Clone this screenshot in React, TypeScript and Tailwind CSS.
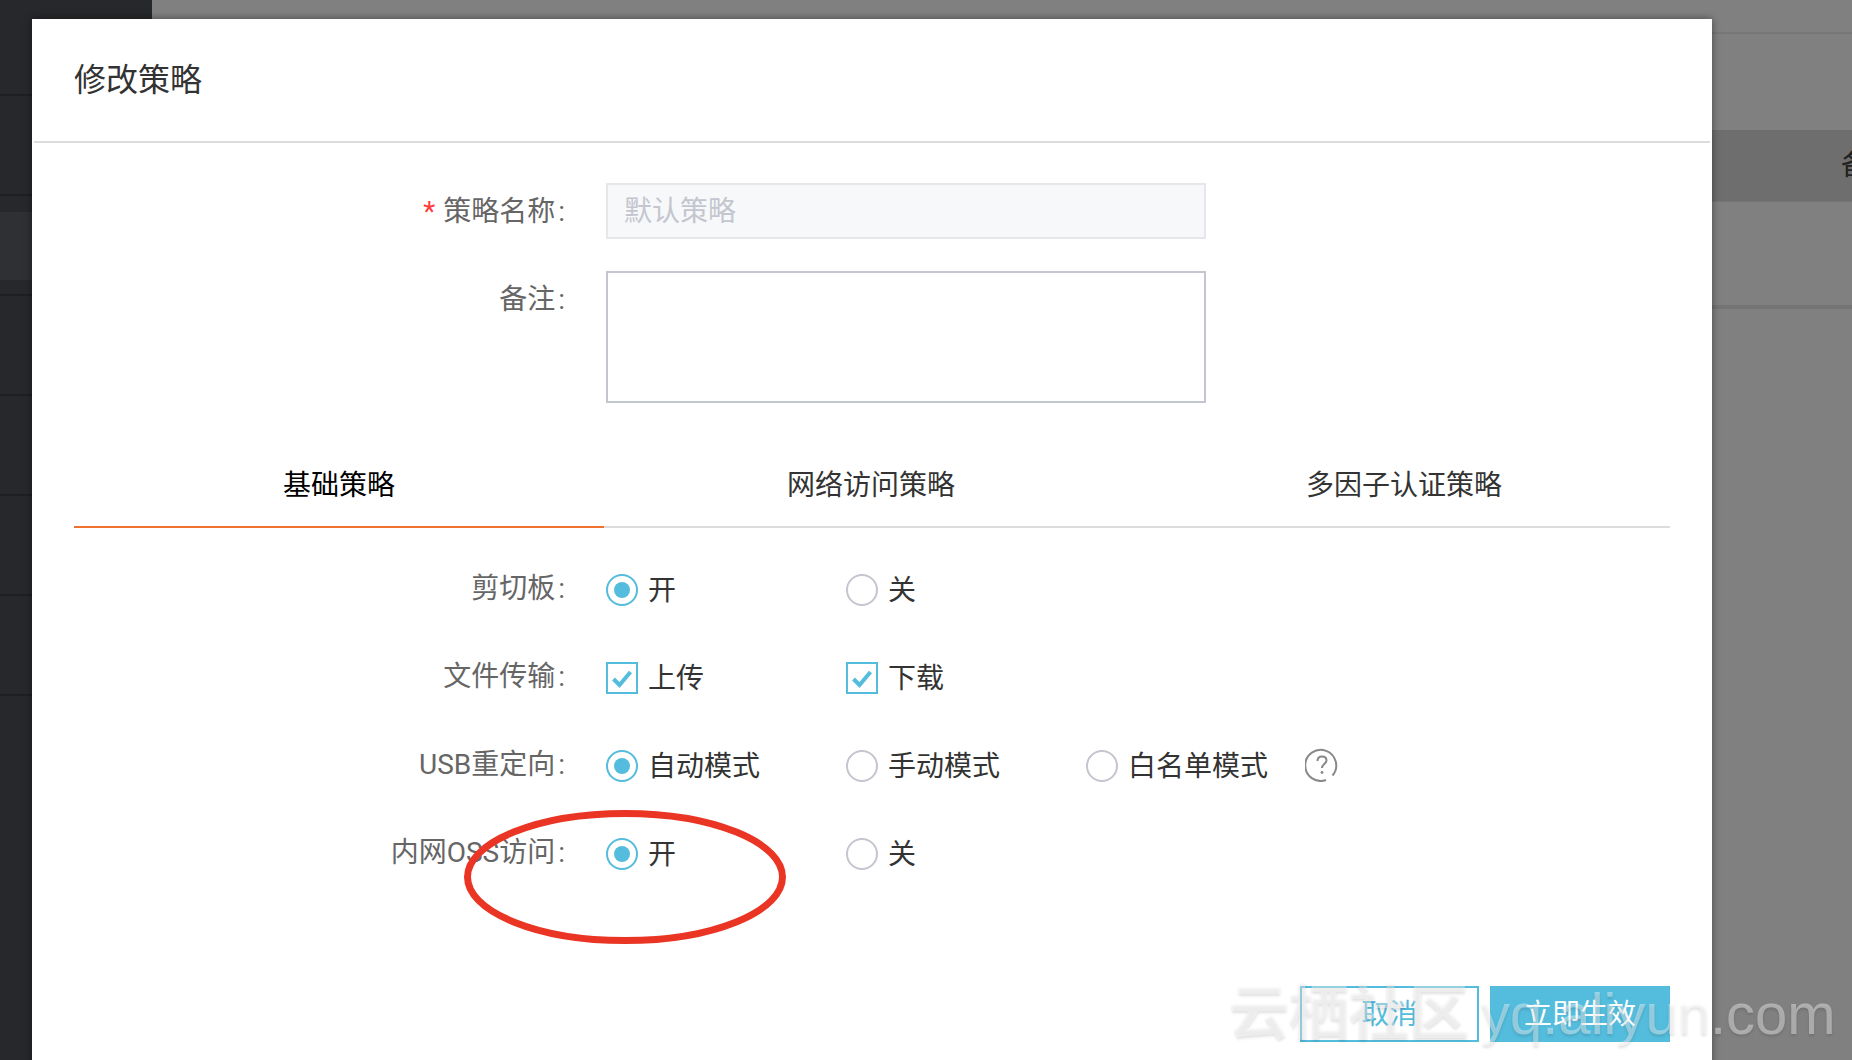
const fontStack = "font-['Liberation_Sans','Noto_Sans_CJK_SC',sans-serif]";

function Radio({ label, checked = false }: { label: string; checked?: boolean }) {
  return (
    <div className="flex w-[240px] items-center gap-[10px]">
      <span
        className={`flex h-[32px] w-[32px] items-center justify-center rounded-full border-2 ${
          checked ? 'border-[#54bcdc]' : 'border-[#c4c6cf]'
        }`}
      >
        {checked && <span className="h-[16px] w-[16px] rounded-full bg-[#54bcdc]" />}
      </span>
      <span className="pt-[2px] text-[28px] leading-[32px] text-[#333]">{label}</span>
    </div>
  );
}

function Checkbox({ label }: { label: string }) {
  return (
    <div className="flex w-[240px] items-center gap-[10px]">
      <span className="flex h-[32px] w-[32px] items-center justify-center border-2 border-[#54bcdc]">
        <svg width="24" height="20" viewBox="0 0 24 20" fill="none">
          <path d="M3.5 11 L9.5 17 L20.5 4" stroke="#54bcdc" strokeWidth="4" />
        </svg>
      </span>
      <span className="pt-[2px] text-[28px] leading-[32px] text-[#333]">{label}</span>
    </div>
  );
}

function FieldLabel({ text, required = false, top = false }: { text: string; required?: boolean; top?: boolean }) {
  return (
    <div
      className={`flex w-[491px] shrink-0 justify-end font-['Roboto','Noto_Sans_CJK_SC',sans-serif] text-[28px] leading-[52px] text-[#666] ${
        top ? 'pt-[3px]' : 'pt-[1px]'
      }`}
    >
      {required && <span className="mr-[8px] text-[#ff3b3b]">*</span>}
      <span>{text}</span>
      <span className="ml-[3px]">:</span>
    </div>
  );
}

function Row({ label, children }: { label: string; children: React.ReactNode }) {
  return (
    <div className="flex h-[56px] gap-[41px]">
      <FieldLabel text={label} />
      <div className="flex h-[56px] items-center">{children}</div>
    </div>
  );
}

function Background() {
  return (
    <div className="flex h-[1060px] w-full">
      <div className="w-[152px] shrink-0 bg-[#27282b]">
        <div className="h-[96px] border-b-2 border-[#1e1f21]" />
        <div className="h-[100px] border-b-2 border-[#1e1f21]" />
        <div className="h-[100px] border-b-2 border-[#1e1f21] pt-[16px]">
          <div className="h-[68px] bg-[#2f3033]" />
        </div>
        <div className="h-[100px] border-b-2 border-[#1e1f21]" />
        <div className="h-[100px] border-b-2 border-[#1e1f21]" />
        <div className="h-[100px] border-b-2 border-[#1e1f21]" />
        <div className="h-[100px] border-b-2 border-[#1e1f21]" />
      </div>
      <div className="flex-1">
        <div className="h-[34px] border-b-2 border-[#777]" />
        <div className="h-[96px]" />
        <div className="flex h-[72px] items-center justify-end overflow-hidden border-b border-[#747474] bg-[#6e6e6e]">
          <span className="mr-[-17px] text-[28px] text-[#222]">备</span>
        </div>
        <div className="h-[103px]" />
        <div className="h-[4px] bg-[#747474]" />
      </div>
    </div>
  );
}

export default function App() {
  return (
    <div className={`relative h-[1060px] w-full overflow-hidden bg-[#808080] ${fontStack}`}>
      <Background />

      {/* dialog */}
      <div className="absolute left-[32px] top-[19px] h-[1100px] w-[1680px] bg-white shadow-[0_0_8px_rgba(0,0,0,0.45)]">
        <div className="mx-[2px] flex h-[124px] items-center border-b-2 border-[#dcdcdc] px-[40px]">
          <h1 className="text-[32px] leading-[40px] text-[#333]">修改策略</h1>
        </div>

        <div className="px-[42px] pt-[40px]">
          <div className="flex gap-[41px]">
            <FieldLabel text="策略名称" required top />
            <div className="flex h-[56px] w-[600px] items-center border-2 border-[#e6e7eb] bg-[#f7f8fa] px-[16px] pt-[2px] text-[28px] text-[#c4c6cf]">
              默认策略
            </div>
          </div>
          <div className="mt-[32px] flex gap-[41px]">
            <FieldLabel text="备注" top />
            <div className="h-[132px] w-[600px] border-2 border-[#c4c6cf]" />
          </div>

          {/* tabs */}
          <div className="mt-[37px] flex h-[88px] border-b-2 border-[#dcdcdc]">
            <div className="-mb-[2px] flex w-[530px] items-center justify-center border-b-2 border-[#f07030] pt-[6px] text-[28px] text-black">
              基础策略
            </div>
            <div className="flex w-[534px] items-center justify-center pt-[6px] text-[28px] text-[#333]">
              网络访问策略
            </div>
            <div className="flex w-[532px] items-center justify-center pt-[6px] text-[28px] text-[#333]">
              多因子认证策略
            </div>
          </div>

          <div className="mt-[34px] flex flex-col gap-[32px]">
            <Row label="剪切板">
              <Radio label="开" checked />
              <Radio label="关" />
            </Row>
            <Row label="文件传输">
              <Checkbox label="上传" />
              <Checkbox label="下载" />
            </Row>
            <Row label="USB重定向">
              <Radio label="自动模式" checked />
              <Radio label="手动模式" />
              <div className="w-[219px]">
                <Radio label="白名单模式" />
              </div>
              <svg width="34" height="34" viewBox="0 0 34 34" fill="none" className="-mt-[2px]">
                <path d="M27.5 27.5 A15.5 15.5 0 1 0 21 32" stroke="#888" strokeWidth="2" />
                <path
                  d="M12.5 13 C12.5 10 14.5 8.5 17 8.5 C19.5 8.5 21.5 10 21.5 12.5 C21.5 15.5 17 16 17 20"
                  stroke="#888"
                  strokeWidth="2"
                />
                <circle cx="17" cy="24.5" r="1.4" fill="#888" />
              </svg>
            </Row>
            <Row label="内网OSS访问">
              <Radio label="开" checked />
              <Radio label="关" />
            </Row>
          </div>

          <div className="mt-[104px] flex justify-end gap-[11px]">
            <div className="flex h-[56px] w-[179px] items-center justify-center border-2 border-[#54bcdc] pt-[2px] text-[28px] text-[#54bcdc]">
              取消
            </div>
            <div className="flex h-[56px] w-[180px] items-center justify-center bg-[#54bcdc] pt-[2px] text-[28px] text-white">
              立即生效
            </div>
          </div>
        </div>
      </div>

      {/* hand drawn annotation */}
      <svg width="340" height="150" viewBox="0 0 340 150" fill="none" className="absolute left-[455px] top-[802px]">
        <ellipse cx="170" cy="75" rx="157.5" ry="63.5" stroke="#ea3525" strokeWidth="7" />
      </svg>

      {/* watermark */}
      <div className="absolute left-[1229px] top-[979px] flex items-center gap-[12px] whitespace-nowrap text-white/40 [text-shadow:0_2px_3px_rgba(0,0,0,0.12)]">
        <span className="text-[60px] leading-[70px] font-bold">云栖社区</span>
        <span className="text-[58px] leading-[70px]">yq.aliyun.com</span>
      </div>
    </div>
  );
}
